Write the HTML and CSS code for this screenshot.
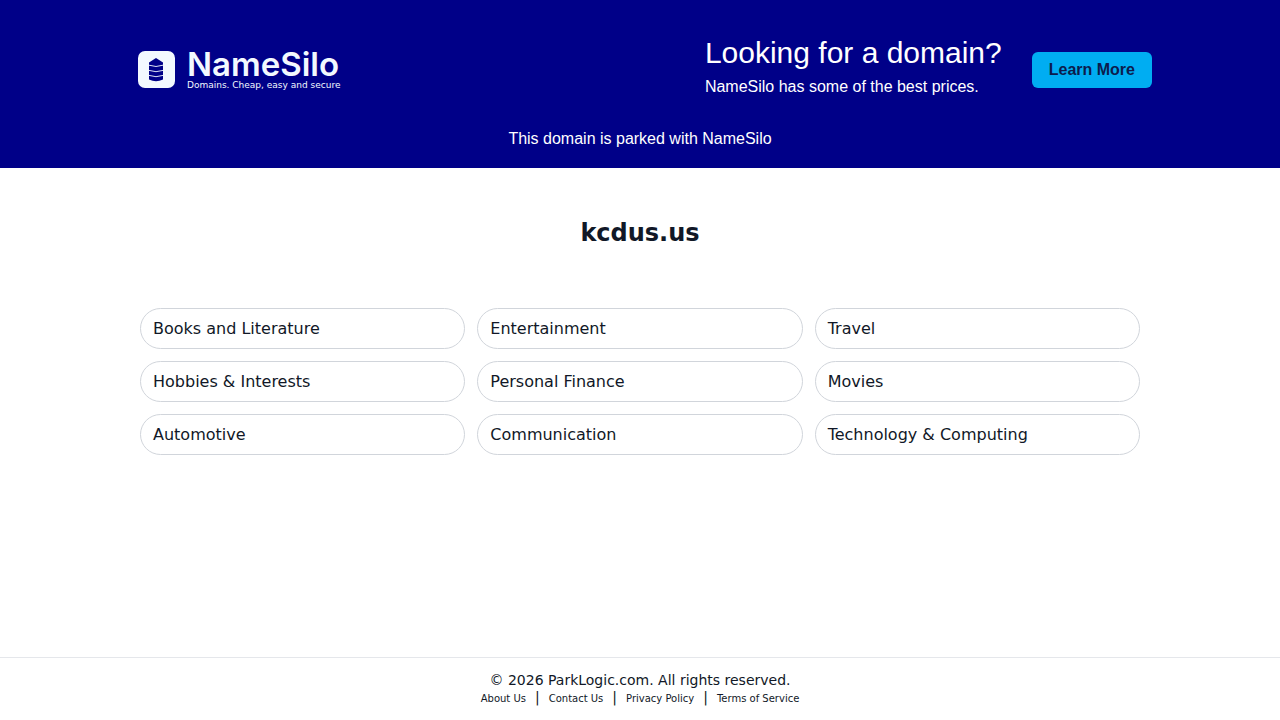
FILE: index.html
```html
<!DOCTYPE html>
<html lang="en">
<head>
<meta charset="utf-8">
<meta name="viewport" content="width=device-width, initial-scale=1">
<title>kcdus.us</title>
<link rel="stylesheet" href="styles.css">
</head>
<body>
<header class="banner">
  <div class="banner-row">
    <div class="logo">
      <svg class="logo-mark" viewBox="0 0 37 37" aria-hidden="true">
        <rect width="37" height="37" rx="7" fill="#f3f9ff"/>
        <path d="M11 11.500 L18 7 L25 11.500 V28.500 Q18 32 11 28.500 Z" fill="#000088"/>
        <path d="M11 14.200 Q18 16.800 25 14.200 M11 19.400 Q18 22 25 19.400 M11 24.400 Q18 27 25 24.400" fill="none" stroke="#f3f9ff" stroke-width="0.9"/>
      </svg>
      <div class="logo-text">
        <span class="logo-name">NameSilo</span>
        <span class="logo-tagline">Domains. Cheap, easy and secure</span>
      </div>
    </div>
    <div class="promo">
      <div class="promo-copy">
        <p class="promo-title">Looking for a domain?</p>
        <p class="promo-text">NameSilo has some of the best prices.</p>
      </div>
      <a class="promo-button" href="#">Learn More</a>
    </div>
  </div>
  <p class="parked">This domain is parked with NameSilo</p>
</header>
<main class="content">
  <h1 class="domain">kcdus.us</h1>
  <nav class="topics">
    <a class="topic" href="#">Books and Literature</a>
    <a class="topic" href="#">Entertainment</a>
    <a class="topic" href="#">Travel</a>
    <a class="topic" href="#">Hobbies &amp; Interests</a>
    <a class="topic" href="#">Personal Finance</a>
    <a class="topic" href="#">Movies</a>
    <a class="topic" href="#">Automotive</a>
    <a class="topic" href="#">Communication</a>
    <a class="topic" href="#">Technology &amp; Computing</a>
  </nav>
</main>
<footer class="footer">
  <p class="copyright">© 2026 ParkLogic.com. All rights reserved.</p>
  <div class="footer-links">
    <a class="footer-link" href="#">About Us</a><span>|</span>
    <a class="footer-link" href="#">Contact Us</a><span>|</span>
    <a class="footer-link" href="#">Privacy Policy</a><span>|</span>
    <a class="footer-link" href="#">Terms of Service</a>
  </div>
</footer>
</body>
</html>
```
FILE: styles.css
```css
* { box-sizing: border-box; }
body {
  margin: 0;
  min-height: 100vh;
  display: flex;
  flex-direction: column;
  color: #111827;
  background: #fff;
  font: 16px/24px "DejaVu Sans", sans-serif;
}
p, h1 { margin: 0; }
a { color: inherit; text-decoration: none; }
.banner {
  background: #000088;
  color: #fff;
  font-family: "Liberation Sans", Arial, sans-serif;
  padding: 32px 24px 17px;
}
.banner-row {
  max-width: 1024px;
  margin: 0 auto;
  padding: 0 0 0 10px;
  display: flex;
  align-items: center;
  justify-content: space-between;
  gap: 24px;
}
.logo {
  display: flex;
  align-items: center;
  gap: 12px;
  padding-bottom: 2px;
  color: #f3f9ff;
}
.logo-mark { width: 37px; height: 37px; }
.logo-text { display: flex; flex-direction: column; }
.logo-name { font: 600 33px/32px Inter, sans-serif; }
.logo-tagline { font: 9px/10px "DejaVu Sans", sans-serif; }
.promo { display: flex; align-items: center; gap: 30px; }
.promo-copy { padding-bottom: 9px; }
.promo-title { font-size: 30px; line-height: 42px; }
.promo-text { margin-top: 1px; line-height: 24px; }
.promo-button {
  padding: 6px 17px;
  border-radius: 6px;
  background: #00adf2;
  color: #0c1c4d;
  font-weight: 700;
}
.parked { margin-top: 19px; text-align: center; }
.content { flex: 1; padding: 48px 24px; }
.domain { font-size: 24px; line-height: 34px; text-align: center; }
.topics {
  max-width: 1000px;
  margin: 58px auto 0;
  display: grid;
  grid-template-columns: repeat(3, 1fr);
  gap: 12px;
}
.topic {
  padding: 8px 12px;
  border: 1px solid #d1d5db;
  border-radius: 24px;
  line-height: 23px;
}
.footer {
  border-top: 1px solid #e5e7eb;
  padding: 14px 16px 13px;
  font-size: 14px;
  line-height: 17px;
  text-align: center;
}
.footer-links {
  display: flex;
  justify-content: center;
  align-items: baseline;
  gap: 9px;
  line-height: 16px;
}
.footer-link { font-size: 10px; }
```
